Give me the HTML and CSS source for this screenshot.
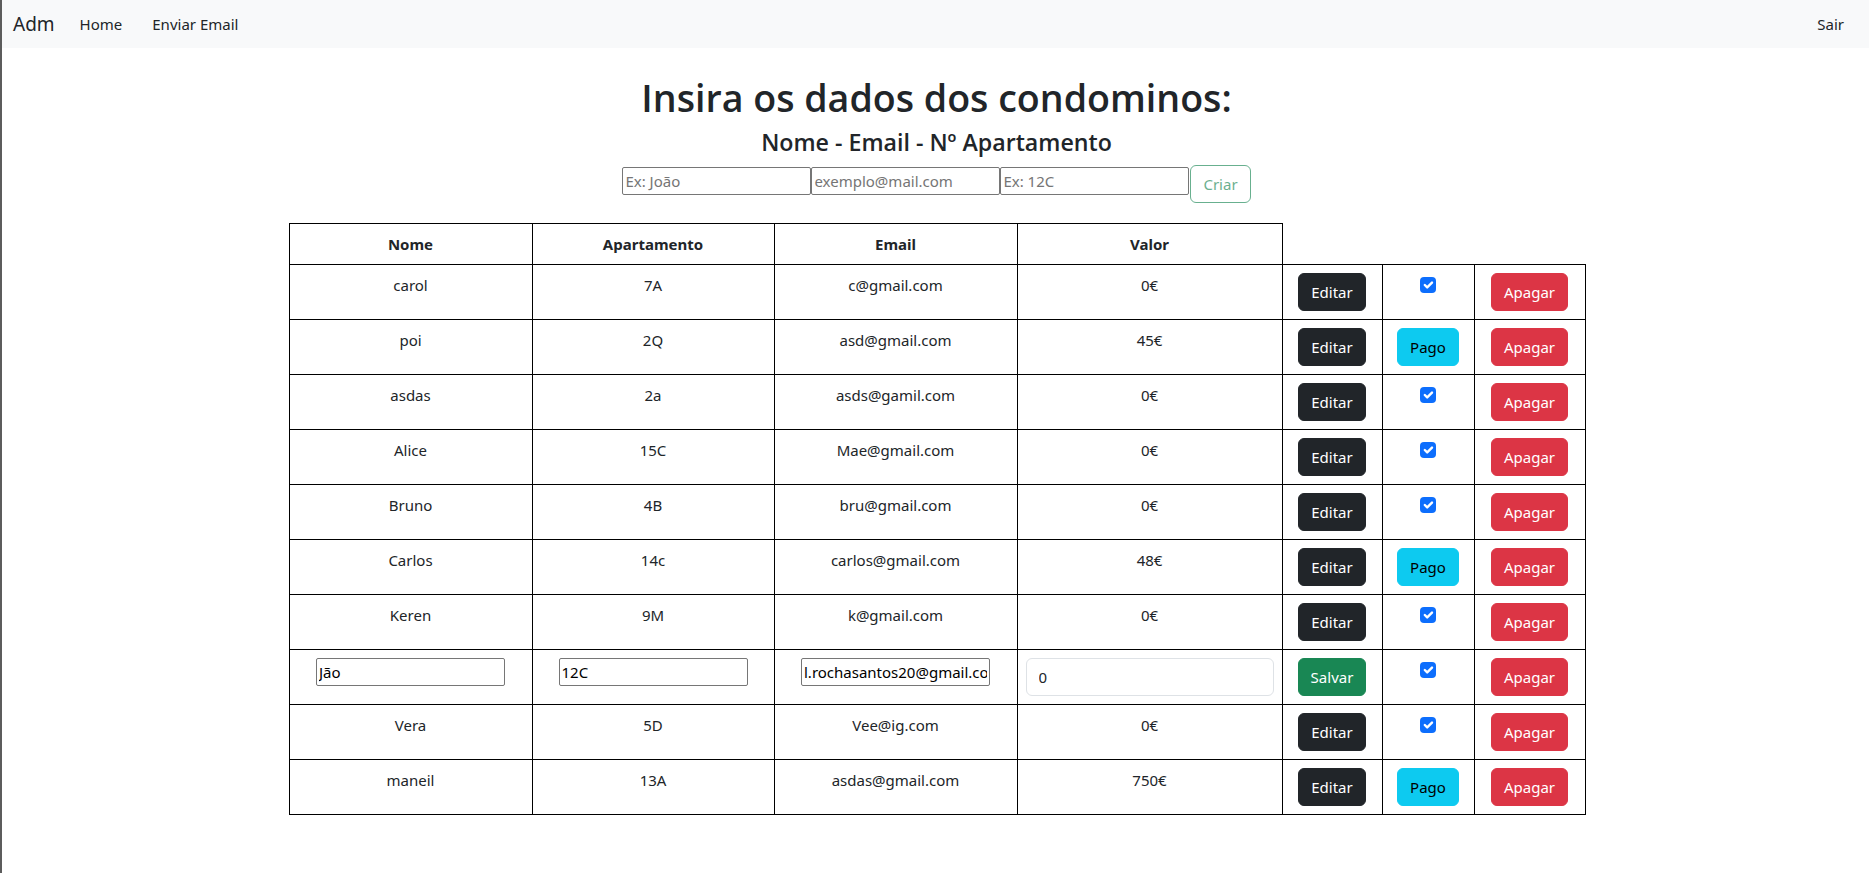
FILE: index.html
```html
<!DOCTYPE html>
<html lang="pt">
<head>
<meta charset="utf-8">
<title>Adm</title>
<link rel="stylesheet" href="styles.css">
</head>
<body>
<div class="page">
  <nav class="navbar">
    <a class="brand">Adm</a>
    <a class="nav-link">Home</a>
    <a class="nav-link">Enviar Email</a>
    <a class="nav-link sair">Sair</a>
  </nav>
  <main class="container">
    <h1 class="title">Insira os dados dos condominos:</h1>
    <h4 class="subtitle">Nome - Email - Nº Apartamento</h4>
    <form class="create-form">
      <input class="plain-input" type="text" placeholder="Ex: João">
      <input class="plain-input" type="text" placeholder="exemplo@mail.com">
      <input class="plain-input" type="text" placeholder="Ex: 12C">
      <button class="btn btn-outline-success" type="button" disabled>Criar</button>
    </form>
    <table class="data-table">
      <colgroup>
        <col class="c-nome"><col class="c-apto"><col class="c-email"><col class="c-valor">
        <col class="c-edit"><col class="c-check"><col class="c-del">
      </colgroup>
      <thead>
        <tr><th>Nome</th><th>Apartamento</th><th>Email</th><th>Valor</th></tr>
      </thead>
      <tbody>
        <tr><td>carol</td><td>7A</td><td>c@gmail.com</td><td>0€</td>
          <td><button class="btn btn-dark">Editar</button></td>
          <td><span class="check"><svg viewBox="0 0 20 20"><path d="M6 10l3 3l6-6"/></svg></span></td>
          <td><button class="btn btn-danger">Apagar</button></td></tr>
        <tr><td>poi</td><td>2Q</td><td>asd@gmail.com</td><td>45€</td>
          <td><button class="btn btn-dark">Editar</button></td>
          <td><button class="btn btn-info">Pago</button></td>
          <td><button class="btn btn-danger">Apagar</button></td></tr>
        <tr><td>asdas</td><td>2a</td><td>asds@gamil.com</td><td>0€</td>
          <td><button class="btn btn-dark">Editar</button></td>
          <td><span class="check"><svg viewBox="0 0 20 20"><path d="M6 10l3 3l6-6"/></svg></span></td>
          <td><button class="btn btn-danger">Apagar</button></td></tr>
        <tr><td>Alice</td><td>15C</td><td>Mae@gmail.com</td><td>0€</td>
          <td><button class="btn btn-dark">Editar</button></td>
          <td><span class="check"><svg viewBox="0 0 20 20"><path d="M6 10l3 3l6-6"/></svg></span></td>
          <td><button class="btn btn-danger">Apagar</button></td></tr>
        <tr><td>Bruno</td><td>4B</td><td>bru@gmail.com</td><td>0€</td>
          <td><button class="btn btn-dark">Editar</button></td>
          <td><span class="check"><svg viewBox="0 0 20 20"><path d="M6 10l3 3l6-6"/></svg></span></td>
          <td><button class="btn btn-danger">Apagar</button></td></tr>
        <tr><td>Carlos</td><td>14c</td><td>carlos@gmail.com</td><td>48€</td>
          <td><button class="btn btn-dark">Editar</button></td>
          <td><button class="btn btn-info">Pago</button></td>
          <td><button class="btn btn-danger">Apagar</button></td></tr>
        <tr><td>Keren</td><td>9M</td><td>k@gmail.com</td><td>0€</td>
          <td><button class="btn btn-dark">Editar</button></td>
          <td><span class="check"><svg viewBox="0 0 20 20"><path d="M6 10l3 3l6-6"/></svg></span></td>
          <td><button class="btn btn-danger">Apagar</button></td></tr>
        <tr><td><input class="plain-input" type="text" value="Jão"></td>
          <td><input class="plain-input" type="text" value="12C"></td>
          <td><input class="plain-input" type="text" value="l.rochasantos20@gmail.com"></td>
          <td><input class="form-control" type="text" value="0"></td>
          <td><button class="btn btn-success">Salvar</button></td>
          <td><span class="check"><svg viewBox="0 0 20 20"><path d="M6 10l3 3l6-6"/></svg></span></td>
          <td><button class="btn btn-danger">Apagar</button></td></tr>
        <tr><td>Vera</td><td>5D</td><td>Vee@ig.com</td><td>0€</td>
          <td><button class="btn btn-dark">Editar</button></td>
          <td><span class="check"><svg viewBox="0 0 20 20"><path d="M6 10l3 3l6-6"/></svg></span></td>
          <td><button class="btn btn-danger">Apagar</button></td></tr>
        <tr><td>maneil</td><td>13A</td><td>asdas@gmail.com</td><td>750€</td>
          <td><button class="btn btn-dark">Editar</button></td>
          <td><button class="btn btn-info">Pago</button></td>
          <td><button class="btn btn-danger">Apagar</button></td></tr>
      </tbody>
    </table>
  </main>
</div>
</body>
</html>
```

FILE: styles.css
```css
* { box-sizing: border-box; }

html, body {
  margin: 0;
  padding: 0;
  height: 100%;
}

body {
  font-family: "Noto Sans", "Open Sans", "DejaVu Sans", sans-serif;
  font-size: 15px;
  line-height: 24px;
  color: #212529;
  background: #fff;
}

.page {
  min-height: 100%;
  border-left: 2px solid #5c5c5c;
}

.navbar {
  display: flex;
  align-items: center;
  height: 48px;
  padding: 0 25px 0 11px;
  background: #f8f9fa;
}

.brand {
  font-size: 19px;
  line-height: 28px;
  color: #212529;
  margin-right: 25px;
}

.nav-link {
  color: #212529;
  font-size: 15px;
  margin-right: 30px;
}

.nav-link.sair {
  margin-left: auto;
  margin-right: 0;
}

.container {
  width: 1296px;
  margin: 0 auto;
  padding-top: 26px;
  position: relative;
  left: 1px;
}

.title {
  margin: 0 0 6px;
  text-align: center;
  font-family: "Open Sans", "Noto Sans", sans-serif;
  font-weight: 600;
  font-size: 37.6px;
  line-height: 48px;
}

.subtitle {
  margin: 0 0 8px;
  text-align: center;
  font-family: "Open Sans", "Noto Sans", sans-serif;
  font-weight: 600;
  font-size: 23.2px;
  line-height: 29px;
}

.create-form {
  display: flex;
  justify-content: center;
  align-items: flex-start;
  margin: 0 0 20px;
}

.create-form .plain-input {
  margin-top: 2px;
}

.plain-input {
  width: 189px;
  height: 28px;
  padding: 1px 2px;
  border: 1px solid #767676;
  border-radius: 2px;
  font-family: inherit;
  font-size: 15px;
  line-height: 24px;
  color: #000;
  background: #fff;
}

.plain-input::placeholder {
  color: #757575;
}

.btn {
  display: inline-block;
  padding: 6px 12px;
  border: 1px solid transparent;
  border-radius: 6px;
  font-family: inherit;
  font-size: 15px;
  line-height: 24px;
  text-align: center;
  cursor: pointer;
}

.btn-outline-success {
  margin-left: 1px;
  color: #198754;
  border-color: #198754;
  background: transparent;
  opacity: .65;
}

.btn-dark { background: #212529; border-color: #212529; color: #fff; }
.btn-danger { background: #dc3545; border-color: #dc3545; color: #fff; }
.btn-info { background: #0dcaf0; border-color: #0dcaf0; color: #000; }
.btn-success { background: #198754; border-color: #198754; color: #fff; }

.data-table {
  width: 1296px;
  border-collapse: collapse;
  table-layout: fixed;
}

.c-nome { width: 243px; }
.c-apto { width: 242px; }
.c-email { width: 243px; }
.c-valor { width: 265px; }
.c-edit { width: 100px; }
.c-check { width: 92px; }
.c-del { width: 111px; }

.data-table th,
.data-table td {
  border: 1px solid #000;
  padding: 8px;
  text-align: center;
}

.data-table th {
  font-weight: 700;
  vertical-align: middle;
  height: 41px;
  padding-top: 7px;
  padding-bottom: 7px;
}

.data-table td {
  vertical-align: top;
  height: 55px;
}

.check {
  display: inline-block;
  width: 16px;
  height: 16px;
  margin-top: 4px;
  border-radius: 4px;
  background: #0d6efd;
  vertical-align: top;
}

.check svg {
  display: block;
  width: 16px;
  height: 16px;
  fill: none;
  stroke: #fff;
  stroke-width: 3;
  stroke-linecap: round;
  stroke-linejoin: round;
}

.form-control {
  display: block;
  width: 100%;
  height: 38px;
  padding: 6px 12px;
  border: 1px solid #dee2e6;
  border-radius: 6px;
  font-family: inherit;
  font-size: 15px;
  line-height: 24px;
  color: #212529;
  background: #fff;
}
```
